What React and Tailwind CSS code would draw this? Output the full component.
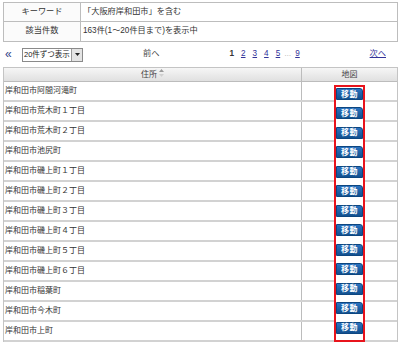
import React from "react";

const rows = [
  "岸和田市阿間河滝町",
  "岸和田市荒木町１丁目",
  "岸和田市荒木町２丁目",
  "岸和田市池尻町",
  "岸和田市磯上町１丁目",
  "岸和田市磯上町２丁目",
  "岸和田市磯上町３丁目",
  "岸和田市磯上町４丁目",
  "岸和田市磯上町５丁目",
  "岸和田市磯上町６丁目",
  "岸和田市稲葉町",
  "岸和田市今木町",
  "岸和田市上町",
];

const font = "font-['Liberation_Sans','Noto_Sans_CJK_JP',sans-serif]";

function SortIcon() {
  return (
    <svg width="5" height="8" viewBox="0 0 5 8" className="ml-[2px] mt-[-3px]">
      <path d="M2.5 0 L5 3 L0 3 Z" fill="#9a9a9a" />
      <path d="M2.5 8 L5 5 L0 5 Z" fill="#d0d0d0" />
    </svg>
  );
}

function MoveButton() {
  return (
    <div className="h-[20px] flex items-start">
      <button className="mt-[1px] w-[27px] h-[12px] rounded-tr-[3px] bg-gradient-to-b from-[#2a72bf] to-[#11508f] border border-[#0d4680] text-white text-[8px] leading-[9px] font-bold tracking-[0.5px] flex items-center justify-center">
        移動
      </button>
    </div>
  );
}

export default function App() {
  return (
    <div className={`w-[400px] h-[342px] bg-white overflow-hidden text-[#333] ${font}`}>
      <div className="ml-[3px] pt-[2px] w-[395px]">
        {/* 検索条件 */}
        <div className="grid grid-cols-[77px_1fr] border border-[#bdbdbd] text-[8.2px]">
          <div className="h-[19px] flex items-center justify-center border-r border-b border-[#bdbdbd] bg-[#fbfbfb]">
            キーワード
          </div>
          <div className="h-[19px] flex items-center pl-[2px] border-b border-[#bdbdbd]">
            「大阪府岸和田市」を含む
          </div>
          <div className="h-[19px] flex items-center justify-center border-r border-[#bdbdbd] bg-[#fbfbfb]">
            該当件数
          </div>
          <div className="h-[19px] flex items-center pl-[2px]">
            163件(1～20件目まで)を表示中
          </div>
        </div>

        {/* ページ送り */}
        <div className="h-[25px] flex items-center text-[8.2px]">
          <span className="w-[19px] pl-[2px] text-[#334488] text-[12px] leading-none mt-[-2px]">«</span>
          <div className="w-[61px] h-[14px] border border-[#8a8a8a] flex items-center">
            <span className="flex-1 pl-[1px] whitespace-nowrap text-[7.5px] text-[#222]">20件ずつ表示</span>
            <span className="w-[11px] h-[12px] border-l border-[#9a9a9a] bg-[#e4e4e4] flex items-center justify-center">
              <svg width="5" height="3" viewBox="0 0 5 3">
                <path d="M0 0 L5 0 L2.5 3 Z" fill="#222" />
              </svg>
            </span>
          </div>
          <span className="ml-[60px] text-[#444]">前へ</span>
          <div className="ml-[70px] flex items-center gap-[7px] text-[#333399]">
            <span className="font-bold text-[#333]">1</span>
            <span className="underline">2</span>
            <span className="underline">3</span>
            <span className="underline">4</span>
            <span className="underline">5</span>
            <span className="text-[#999] text-[7px] -mx-[3px]">…</span>
            <span className="underline">9</span>
          </div>
          <span className="ml-auto mr-[12px] underline text-[#333399]">次へ</span>
        </div>

        {/* 一覧 */}
        <div className="relative border-l border-r border-t border-[#c4c4c4] text-[8px]">
          <div className="grid grid-cols-[298px_1fr] h-[14px] bg-gradient-to-b from-[#f6f6f6] to-[#e0e0e0] border-b border-[#bcbcbc] text-[#444]">
            <div className="flex items-center justify-center border-r border-[#bcbcbc]">
              住所
              <SortIcon />
            </div>
            <div className="flex items-center justify-center">地図</div>
          </div>
          {rows.map((name) => (
            <div key={name} className="grid grid-cols-[298px_1fr] h-[20px] border-b-2 border-[#d2d2d2]">
              <div className="flex items-center pl-[1px] border-r border-[#bcbcbc]">{name}</div>
              <div />
            </div>
          ))}

          {/* 強調枠 */}
          <div className="absolute left-[330px] top-[17px] w-[31px] bottom-0 border-2 border-[#e8141c] bg-white flex flex-col items-center">
            {rows.map((name) => (
              <MoveButton key={name} />
            ))}
          </div>
        </div>
      </div>
    </div>
  );
}
